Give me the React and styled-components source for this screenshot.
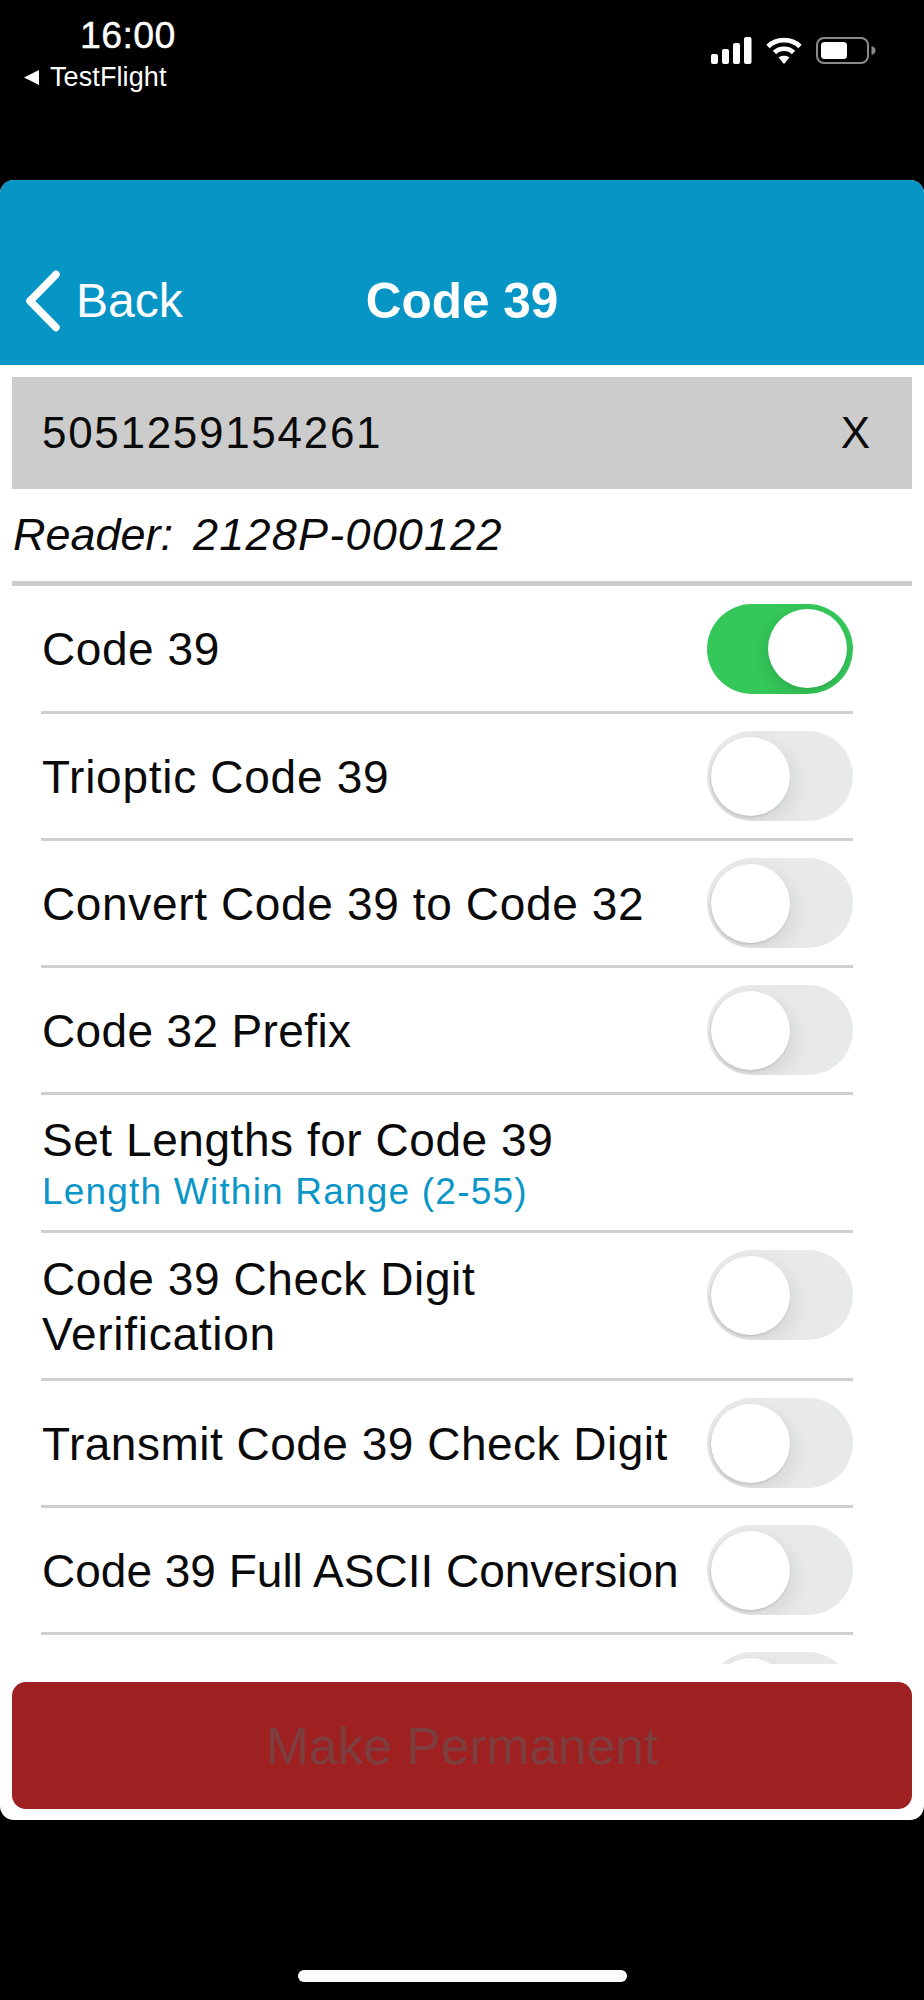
import React from "react";
import styled, { createGlobalStyle } from "styled-components";

const Global = createGlobalStyle`
  html, body { margin: 0; padding: 0; background: #000; }
  * { box-sizing: border-box; }
`;

const Screen = styled.div`
  width: 924px;
  height: 2000px;
  background: #000;
  display: flex;
  flex-direction: column;
  font-family: "Liberation Sans", Arial, sans-serif;
  overflow: hidden;
`;

const StatusBar = styled.div`
  height: 180px;
  flex: none;
  display: flex;
  justify-content: space-between;
  align-items: flex-start;
  padding: 15px 48px 0 24px;
  color: #fff;
`;

const StatusLeft = styled.div`
  display: flex;
  flex-direction: column;
  align-items: flex-start;
`;

const Time = styled.div`
  font-size: 37.5px;
  line-height: 40px;
  font-weight: 400;
  margin-left: 56px;
  letter-spacing: 0.4px;
  -webkit-text-stroke: 0.4px #fff;
`;

const BackApp = styled.div`
  display: flex;
  align-items: center;
  gap: 10px;
  font-size: 27px;
  line-height: 30px;
  margin-top: 7px;
  letter-spacing: 0.1px;
`;

const StatusIcons = styled.div`
  display: flex;
  align-items: center;
  gap: 14px;
  margin-top: 22px;
`;

const Card = styled.div`
  height: 1640px;
  flex: none;
  background: #fff;
  border-radius: 14px;
  overflow: hidden;
  display: flex;
  flex-direction: column;
`;

const Header = styled.header`
  height: 185px;
  flex: none;
  background: #0795c6;
  color: #fff;
  display: grid;
  grid-template-columns: 1fr auto 1fr;
  align-items: center;
  padding: 56px 0 0;
`;

const BackButton = styled.div`
  display: flex;
  align-items: center;
  gap: 15px;
  font-size: 48px;
  line-height: 60px;
  padding-left: 25px;
`;

const Title = styled.div`
  font-size: 49.5px;
  line-height: 60px;
  font-weight: 700;
`;

const Body = styled.div`
  flex: 1;
  min-height: 0;
  display: flex;
  flex-direction: column;
  padding: 12px 12px 11px;
`;

const ScanBar = styled.div`
  height: 112px;
  flex: none;
  background: #cccccc;
  display: flex;
  align-items: center;
  justify-content: space-between;
  padding: 0 42px 0 30px;
  font-size: 44px;
  color: #0a0a0a;
`;

const Digits = styled.span`
  letter-spacing: 1.7px;
`;

const Reader = styled.div`
  height: 97px;
  flex: none;
  display: flex;
  align-items: center;
  gap: 20px;
  font-size: 45px;
  font-style: italic;
  color: #0a0a0a;
  border-bottom: 5px solid #cccccc;
  padding: 0 0 0 1px;
`;

const ReaderId = styled.span`
  letter-spacing: 1.2px;
`;

const List = styled.div`
  flex: 1;
  min-height: 0;
  overflow: hidden;
  padding: 0 59px 0 29px;
`;

const Row = styled.div`
  min-height: ${(p) => p.$height}px;
  display: flex;
  align-items: center;
  justify-content: space-between;
  border-bottom: 3px solid #cfcfcf;
  color: #0a0a0a;
`;

const LastRow = styled.div`
  display: flex;
  justify-content: flex-end;
  padding-top: 17px;
`;

const LabelBlock = styled.div`
  display: flex;
  flex-direction: column;
  min-width: 0;
  padding-top: ${(p) => (p.$stacked ? 0 : 2)}px;
`;

const Label = styled.div`
  font-size: 46px;
  line-height: 55px;
  padding-left: 1px;
  letter-spacing: ${(p) => p.$spacing}px;
`;

const Sub = styled.div`
  font-size: 37px;
  line-height: 42px;
  margin-top: 3px;
  color: #0b96c8;
  padding-left: 1px;
  letter-spacing: 1.2px;
`;

const Track = styled.div`
  width: 146px;
  height: 90px;
  flex: none;
  border-radius: 45px;
  background: ${(p) => (p.$on ? "#34c759" : "#e8e9e9")};
  display: flex;
  align-items: center;
  justify-content: ${(p) => (p.$on ? "flex-end" : "flex-start")};
  padding: 0 ${(p) => (p.$on ? 6 : 4)}px;
  overflow: hidden;
  ${(p) => p.$raised && "align-self: flex-start; margin-top: 17px;"}
`;

const Knob = styled.div`
  width: 79px;
  height: 79px;
  border-radius: 50%;
  background: #fff;
  box-shadow: ${(p) =>
    p.$on
      ? "0 2px 2px rgba(0,0,0,0.06), -3px 6px 16px rgba(0,0,0,0.1)"
      : "-1px 2px 3px rgba(0,0,0,0.11), 0 0 2px rgba(0,0,0,0.05), 6px 8px 20px rgba(0,0,0,0.08)"};
`;

const Footer = styled.div`
  flex: none;
  padding-top: 18px;
`;

const PermanentButton = styled.div`
  height: 127px;
  background: #9e2020;
  border-radius: 14px;
  display: flex;
  align-items: center;
  justify-content: center;
  font-size: 51.5px;
  color: #7d3e3f;
`;

const HomeArea = styled.div`
  flex: 1;
  display: flex;
  justify-content: center;
  align-items: flex-end;
  padding: 0 0 18px 1px;
`;

const HomeBar = styled.div`
  width: 329px;
  height: 12px;
  border-radius: 6px;
  background: #fff;
`;

const Signal = () => (
  <svg width="41" height="27" viewBox="0 0 41 27" fill="#fff">
    <rect x="0" y="17" width="7" height="10" rx="2" />
    <rect x="11" y="12" width="7" height="15" rx="2" />
    <rect x="22" y="6" width="7" height="21" rx="2" />
    <rect x="33" y="0" width="7.5" height="27" rx="2" />
  </svg>
);

const Wifi = () => (
  <svg width="36" height="27" viewBox="0 0 36 27" fill="none" stroke="#fff" strokeWidth="4.6">
    <path d="M2 9.500C10.500 1 25.500 1 34 9.500" />
    <path d="M8.500 15.500C13.500 10.500 22.500 10.500 27.500 15.500" />
    <path d="M18 27l-5.500-6.500c3-2.500 8-2.500 11 0z" fill="#fff" stroke="none" />
  </svg>
);

const Battery = () => (
  <svg width="60" height="27" viewBox="0 0 60 27">
    <rect x="1" y="1" width="51" height="25" rx="7" fill="none" stroke="#8a8a8a" strokeWidth="2" />
    <rect x="5" y="5" width="26" height="17" rx="3.500" fill="#fff" />
    <path d="M55.500 9c2.500.8 4 2.500 4 4.500s-1.500 3.700-4 4.500z" fill="#8a8a8a" />
  </svg>
);

const Triangle = () => (
  <svg width="16" height="15" viewBox="0 0 16 15" fill="#fff">
    <path d="M0 7.500L15 0v15z" />
  </svg>
);

const Chevron = () => (
  <svg width="36" height="62" viewBox="0 0 36 62" fill="none" stroke="#fff" strokeWidth="7.500" strokeLinecap="round" strokeLinejoin="round">
    <path d="M31 4.500L5 31l26 26.500" />
  </svg>
);

const rows = [
  { lines: [["Code 39", 0.55]], on: true, height: 128 },
  { lines: [["Trioptic Code 39", 0.72]], height: 127 },
  { lines: [["Convert Code 39 to Code 32", 0.64]], height: 127 },
  { lines: [["Code 32 Prefix", 0.36]], height: 127 },
  { lines: [["Set Lengths for Code 39", 0.55]], sub: "Length Within Range (2-55)", noToggle: true, height: 138 },
  { lines: [["Code 39 Check Digit", 0.6], ["Verification", 0.74]], raised: true, height: 148 },
  { lines: [["Transmit Code 39 Check Digit", 0.5]], height: 127 },
  { lines: [["Code 39 Full ASCII Conversion", 0]], height: 127 },
];

export default function App() {
  return (
    <Screen>
      <Global />
      <StatusBar>
        <StatusLeft>
          <Time>16:00</Time>
          <BackApp>
            <Triangle />
            TestFlight
          </BackApp>
        </StatusLeft>
        <StatusIcons>
          <Signal />
          <Wifi />
          <Battery />
        </StatusIcons>
      </StatusBar>
      <Card>
        <Header>
          <BackButton>
            <Chevron />
            Back
          </BackButton>
          <Title>Code 39</Title>
        </Header>
        <Body>
          <ScanBar>
            <Digits>5051259154261</Digits>
            <span>X</span>
          </ScanBar>
          <Reader>
            <span>Reader:</span>
            <ReaderId>2128P-000122</ReaderId>
          </Reader>
          <List>
            {rows.map((r) => (
              <Row key={r.lines[0][0]} $height={r.height}>
                <LabelBlock $stacked={!!r.sub}>
                  {r.lines.map(([text, spacing]) => (
                    <Label key={text} $spacing={spacing}>{text}</Label>
                  ))}
                  {r.sub && <Sub>{r.sub}</Sub>}
                </LabelBlock>
                {!r.noToggle && (
                  <Track $on={r.on} $raised={r.raised}>
                    <Knob $on={r.on} />
                  </Track>
                )}
              </Row>
            ))}
            <LastRow>
              <Track>
                <Knob />
              </Track>
            </LastRow>
          </List>
          <Footer>
            <PermanentButton>Make Permanent</PermanentButton>
          </Footer>
        </Body>
      </Card>
      <HomeArea>
        <HomeBar />
      </HomeArea>
    </Screen>
  );
}
